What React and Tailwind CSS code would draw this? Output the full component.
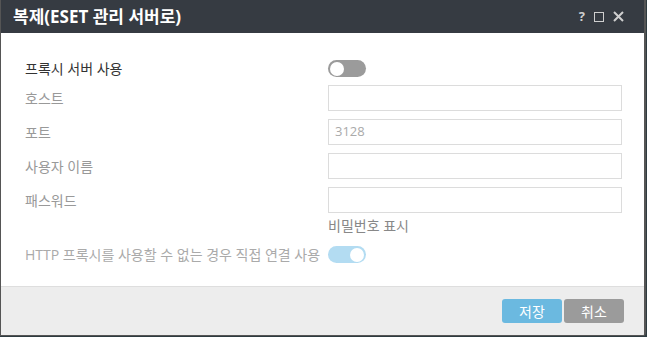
import React from 'react';

const font = { fontFamily: '"Open Sans", "Noto Sans CJK KR", sans-serif' };

const Toggle = ({ on }) => (
  <div
    className={
      'w-[38px] h-[17px] rounded-full flex items-center px-[2px] ' +
      (on ? 'bg-[#b3dcf2] justify-end' : 'bg-[#9b9b9b] justify-start')
    }
  >
    <div className="w-[14px] h-[14px] rounded-full bg-white" />
  </div>
);

const Field = ({ label, placeholder }) => (
  <div className="flex items-center h-[26px]">
    <div className="w-[303px] text-[14px] text-[#999]">{label}</div>
    <div className="w-[294px] h-[26px] border border-[#dcdcdc] bg-white flex items-center px-[6px] text-[13px] text-[#aaa]">
      {placeholder}
    </div>
  </div>
);

export default function App() {
  return (
    <div className="w-[647px] h-[337px] bg-[#2e3b40] overflow-hidden" style={font}>
      <div className="w-[646px] h-[336px] flex flex-col bg-white border-l border-r-2 border-b border-[#555] rounded-br-[3px] overflow-hidden">
        {/* header */}
        <div className="h-[33px] bg-[#363b42] flex items-center pl-[12px] pr-[20px] shrink-0">
          <div className="text-white text-[17px] font-bold">복제(ESET 관리 서버로)</div>
          <div className="ml-auto flex items-center gap-[9px] text-[#cfcfcf]">
            <span className="text-[13px] font-bold">?</span>
            <span className="w-[10px] h-[10px] border-[1.5px] border-[#cfcfcf]" />
            <svg width="11" height="11" viewBox="0 0 11 11">
              <path d="M1 1 L10 10 M10 1 L1 10" stroke="#cfcfcf" strokeWidth="2" />
            </svg>
          </div>
        </div>

        {/* body */}
        <div className="flex-1 pl-[24px] pt-[27px] flex flex-col">
          <div className="flex items-center h-[17px]">
            <div className="w-[303px] text-[14px] text-[#333]">프록시 서버 사용</div>
            <Toggle on={false} />
          </div>
          <div className="flex flex-col gap-[8px] mt-[8px]">
            <Field label="호스트" />
            <Field label="포트" placeholder="3128" />
            <Field label="사용자 이름" />
            <Field label="패스워드" />
          </div>
          <div className="pl-[303px] mt-[2px] text-[14px] text-[#888]">비밀번호 표시</div>
          <div className="flex items-center mt-[10px] h-[17px]">
            <div className="w-[303px] text-[14px] text-[#aaa] whitespace-nowrap">HTTP 프록시를 사용할 수 없는 경우 직접 연결 사용</div>
            <Toggle on={true} />
          </div>
        </div>

        {/* footer */}
        <div className="h-[49px] shrink-0 bg-[#ededed] border-t border-[#dedede] flex items-center justify-end pr-[20px] gap-[2px]">
          <button className="w-[60px] h-[24px] rounded-[3px] bg-[#6bb9e0] text-white text-[14px]">저장</button>
          <button className="w-[60px] h-[24px] rounded-[3px] bg-[#9b9b9b] text-white text-[14px]">취소</button>
        </div>
      </div>
    </div>
  );
}
